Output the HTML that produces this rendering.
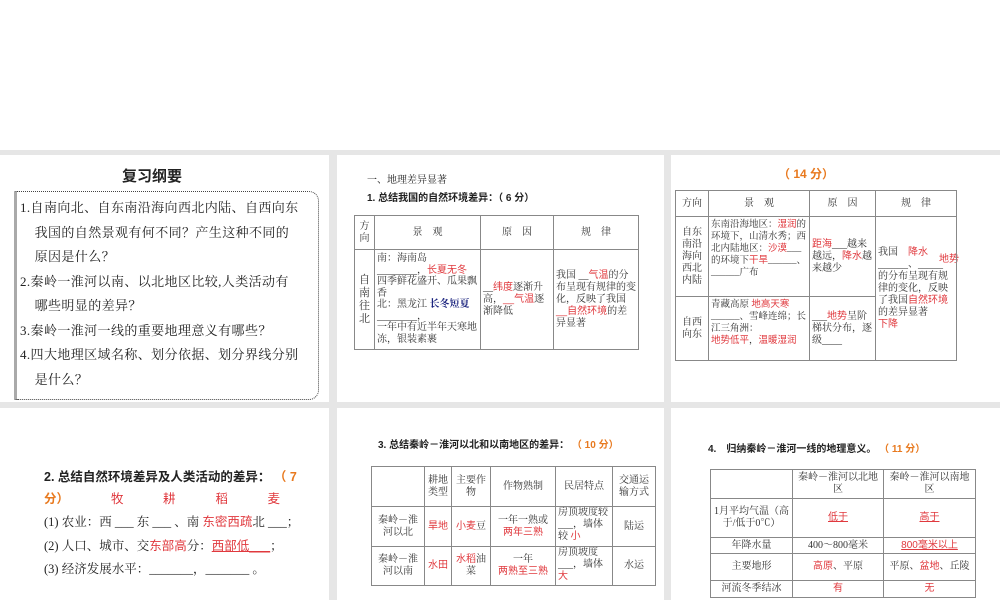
<!DOCTYPE html><html style="width:1000px;height:600px;overflow:hidden"><head><meta charset="utf-8"><style>
*{margin:0;padding:0;box-sizing:border-box}
body{width:1000px;height:600px;background:#e6e6e6;position:relative;overflow:hidden;font-family:"Liberation Serif","Noto Serif CJK SC",serif;color:#222}
.p{position:absolute;background:#fff}
.a{position:absolute;white-space:nowrap}
.r{color:#e0393e;font-family:"Liberation Sans","Noto Sans CJK SC",sans-serif}
.o{color:#e8791e;font-weight:bold;font-family:"Liberation Sans","Noto Sans CJK SC",sans-serif}
table{position:absolute;border-collapse:collapse;font-size:10px;line-height:12px;table-layout:fixed}
td{border:1px solid #888;text-align:center;vertical-align:middle;padding:0 2px;color:#333;overflow:hidden}
.l{text-align:left;vertical-align:top}
.b{font-weight:bold;font-family:"Liberation Sans","Noto Sans CJK SC",sans-serif}
</style></head><body>
<div class="p" style="left:0;top:0;width:1000px;height:150px;"></div>
<div class="p" style="left:0;top:155px;width:329px;height:247px">
<div class="a b" style="left:122px;top:10px;font-size:15px">复习纲要</div>
<div style="position:absolute;left:14px;top:36px;width:305px;height:209px;border:1.5px dotted #444;border-left:3px solid #aaa;border-radius:0 10px 10px 0"></div>
<div class="a" style="left:20px;top:41px;font-size:13px;line-height:24.5px;letter-spacing:0.4px">1.自南向北、自东南沿海向西北内陆、自西向东<br>&nbsp;&nbsp;&nbsp;&nbsp;我国的自然景观有何不同？产生这种不同的<br>&nbsp;&nbsp;&nbsp;&nbsp;原因是什么？<br>2.秦岭一淮河以南、以北地区比较,人类活动有<br>&nbsp;&nbsp;&nbsp;&nbsp;哪些明显的差异？<br>3.秦岭一淮河一线的重要地理意义有哪些？<br>4.四大地理区域名称、划分依据、划分界线分别<br>&nbsp;&nbsp;&nbsp;&nbsp;是什么？</div>
</div>
<div class="p" style="left:337px;top:155px;width:327px;height:247px">
<div class="a" style="left:30px;top:16px;font-size:10px">一、地理差异显著</div>
<div class="a b" style="left:30px;top:34px;font-size:10px">1. 总结我国的自然环境差异：（ 6 分）</div>
</div>
<table style="left:354px;top:215px;width:285px">
<tr style="height:34px"><td style="width:20px">方向</td><td style="width:106px">景　观</td><td style="width:73px">原　因</td><td>规　律</td></tr>
<tr style="height:100px"><td style="padding:0 3px;font-size:11px;line-height:13px">自南往北</td><td class="l" style="font-size:10px;line-height:11.5px;padding-top:3px">南：海南岛<br>________，<span class="r">长夏无冬</span><br>四季鲜花盛开、瓜果飘香<br>北：黑龙江 <b style="color:#1a237e">长冬短夏</b><br>________，<br>一年中有近半年天寒地冻，银装素裹</td><td class="l" style="vertical-align:middle">__<span class="r">纬度</span>逐渐升高，<span class="r">__气温</span>逐渐降低</td><td class="l" style="vertical-align:middle">我国 __<span class="r">气温</span>的分布呈现有规律的变化，反映了我国 <span class="r">__自然环境</span>的差异显著</td></tr>
</table>
<div class="p" style="left:671px;top:155px;width:329px;height:247px">
<div class="a o" style="left:107px;top:10px;font-size:12px">（ 14 分）</div>
<div class="a r" style="left:268px;top:95px;font-size:10px">地势</div>
</div>
<table style="left:675px;top:190px;width:282px">
<tr style="height:26px"><td style="width:33px">方向</td><td style="width:101px">景　观</td><td style="width:66px">原　因</td><td>规　律</td></tr>
<tr style="height:80px"><td>自东南沿海向西北内陆</td><td class="l" style="font-size:9.5px;padding-top:2px">东南沿海地区：<span class="r">湿润</span>的环境下，山清水秀；西北内陆地区：<span class="r">沙漠</span>___的环境下<span class="r">干旱</span>______、______广布</td><td class="l" style="vertical-align:middle"><span class="r">距海</span>___越来越远，<span class="r">降水</span>越来越少</td><td class="l" rowspan="2" style="vertical-align:middle">我国　<span class="r">降水</span><br>______、_____<br>的分布呈现有规律的变化，反映了我国<span class="r">自然环境</span><br>的差异显著<br><span class="r">下降</span></td></tr>
<tr style="height:64px"><td>自西向东</td><td class="l" style="font-size:9.5px;padding-top:2px">青藏高原 <span class="r">地高天寒</span><br>______、雪峰连绵；长江三角洲：<br><span class="r">地势低平</span>，<span class="r">温暖湿润</span></td><td class="l" style="vertical-align:middle">___<span class="r">地势</span>呈阶梯状分布，逐级____</td></tr>
</table>
<div class="p" style="left:0;top:408px;width:329px;height:192px">
<div class="a b" style="left:44px;top:58px;font-size:12.5px">2. 总结自然环境差异及人类活动的差异： <span class="o">（ 7</span></div>
<div class="a" style="left:44px;top:80px;font-size:12.5px"><span class="o">分）</span><span class="r" style="margin-left:42px;letter-spacing:18px">牧 耕</span><span class="r" style="margin-left:22px;letter-spacing:18px">稻 麦</span></div>
<div class="a" style="left:44px;top:103px;font-size:12.5px">(1) 农业：西 ___ 东 ___ 、南 <span class="r">东密西疏</span>北 ___；</div>
<div class="a" style="left:44px;top:127px;font-size:12.5px">(2) 人口、城市、交<span class="r">东部高</span>分：<span class="r" style="text-decoration:underline">西部低___</span>；</div>
<div class="a" style="left:44px;top:151px;font-size:12.5px">(3) 经济发展水平：_______，_______ 。</div>
</div>
<div class="p" style="left:337px;top:408px;width:327px;height:192px">
<div class="a b" style="left:41px;top:28px;font-size:10px">3. 总结秦岭－淮河以北和以南地区的差异： <span class="o">（ 10 分）</span></div>
</div>
<table style="left:371px;top:466px;width:285px">
<tr style="height:40px"><td style="width:53px"></td><td style="width:27px">耕地类型</td><td style="width:39px">主要作物</td><td style="width:65px">作物熟制</td><td style="width:57px">民居特点</td><td>交通运输方式</td></tr>
<tr style="height:40px"><td>秦岭－淮河以北</td><td><span class="r">旱地</span></td><td><span class="r">小麦</span>豆</td><td>一年一熟或<br><span class="r">两年三熟</span></td><td class="l">房顶坡度较___，墙体较 <span class="r">小</span></td><td>陆运</td></tr>
<tr style="height:39px"><td>秦岭－淮河以南</td><td><span class="r">水田</span></td><td><span class="r">水稻</span>油菜</td><td>一年<br><span class="r">两熟至三熟</span></td><td class="l">房顶坡度___，墙体<span class="r">大</span></td><td>水运</td></tr>
</table>
<div class="p" style="left:671px;top:408px;width:329px;height:192px">
<div class="a b" style="left:37px;top:32px;font-size:10px">4.　归纳秦岭－淮河一线的地理意义。 <span class="o">（ 11 分）</span></div>
</div>
<table style="left:710px;top:469px;width:266px">
<tr style="height:29px"><td style="width:82px"></td><td style="width:91px">秦岭－淮河以北地区</td><td>秦岭－淮河以南地区</td></tr>
<tr style="height:39px"><td>1月平均气温（高于/低于0℃）</td><td><span class="r" style="text-decoration:underline">低于</span></td><td><span class="r" style="text-decoration:underline">高于</span></td></tr>
<tr style="height:16px"><td>年降水量</td><td>400～800毫米</td><td><span class="r" style="text-decoration:underline">800毫米以上</span></td></tr>
<tr style="height:27px"><td>主要地形</td><td><span class="r">高原</span>、平原</td><td>平原、<span class="r">盆地</span>、丘陵</td></tr>
<tr style="height:17px"><td>河流冬季结冰</td><td><span class="r">有</span></td><td><span class="r">无</span></td></tr>
</table>
</body></html>
